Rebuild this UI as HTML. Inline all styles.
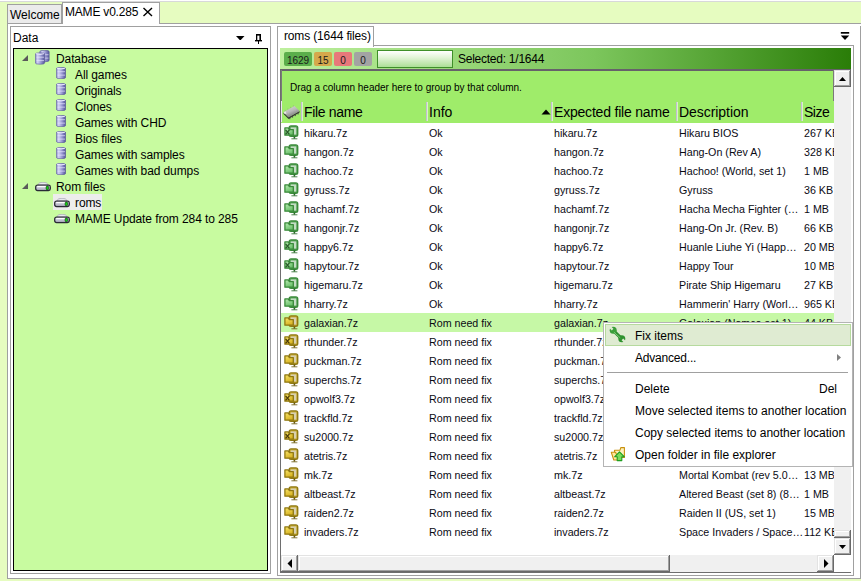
<!DOCTYPE html>
<html><head><meta charset="utf-8"><style>
*{box-sizing:border-box;margin:0;padding:0}
html,body{width:861px;height:581px;overflow:hidden}
body{position:relative;background:#e6fcc0;font-family:"Liberation Sans",sans-serif;font-size:12px;color:#000}
.a{position:absolute}
.t{position:absolute;white-space:nowrap;line-height:16px}
.r{position:absolute;white-space:nowrap;line-height:19px;font-size:10.7px;color:#0a0a14}
.h{position:absolute;white-space:nowrap;line-height:21px;font-size:14px;letter-spacing:-0.4px;color:#000}
.m{position:absolute;white-space:nowrap;line-height:22px;font-size:12px;color:#000;margin-top:1px}
#topline{left:0;top:0;width:861px;height:1px;background:#fff}
#topline2{left:0;top:1px;width:861px;height:1px;background:#d8d8da}
#outer{left:7px;top:23px;width:854px;height:556px;border:1px solid #a0a0a0;border-right:none;background:#fff}
#tabW{left:7px;top:4px;width:55px;height:19px;background:#ebebeb;border:1px solid #a0a0a0;border-bottom:none}
#tabM{left:62px;top:2px;width:98px;height:22px;background:#fff;border:1px solid #a0a0a0;border-bottom:none}
#lp{left:10px;top:26px;width:261px;height:548px;border:1px solid #a0a0a0;background:#fff}
#tree{left:13px;top:48px;width:255px;height:523px;border:1px solid #000;background:#c8fba0}
#rp{left:277px;top:26px;width:577px;height:550px;border:1px solid #a0a0a0;border-top:none;border-right:none;background:#fff}
#rpr{left:860px;top:26px;width:1px;height:553px;background:#a0a0a0}
#tabR{left:277px;top:26px;width:97px;height:21px;border:1px solid #a0a0a0;border-bottom:none;background:#fff}
#rpline{left:373px;top:45px;width:481px;height:1px;background:#a0a0a0}
#strip{left:280px;top:48px;width:571px;height:22px;background:linear-gradient(to right,#bef09e 0%,#7cc65c 55%,#2a7d08 100%)}
#grid{left:280px;top:69px;width:571px;height:504px;border-left:1px solid #6e6e6e;border-top:2px solid #66626a;border-bottom:1px solid #6e6e6e;background:#fff}
#grp{left:281px;top:71px;width:553px;height:30px;background:#9fec6a}
#hdr{left:281px;top:101px;width:553px;height:22px;background:#9fec6a}
.badge{position:absolute;top:52px;height:14px;border-radius:2px;font-size:10px;line-height:14px;padding-top:2px;text-align:center;color:#1a1a1a}
.sep{position:absolute;top:102px;width:2px;height:19px;border-left:1px solid #c4bcd4;border-right:1px solid #d8f5c4}
.sb{position:absolute;background:#f0f0f0;box-shadow:inset -1px -1px 0 #696969,inset 1px 1px 0 #e3e3e3,inset -2px -2px 0 #a0a0a0,inset 2px 2px 0 #fff}
#menu{left:603px;top:322px;width:250px;height:145px;background:#fff;border:1px solid #b4b4b4}

</style></head><body>
<svg width="0" height="0" style="position:absolute">
<defs>
<linearGradient id="dbg" x1="0" x2="1" y1="0" y2="0"><stop offset="0" stop-color="#8c8cc8"/><stop offset=".25" stop-color="#d2d2f4"/><stop offset=".6" stop-color="#9898d2"/><stop offset="1" stop-color="#525298"/></linearGradient>
<linearGradient id="drvg" x1="0" x2="0" y1="0" y2="1"><stop offset="0" stop-color="#f4f4fa"/><stop offset=".5" stop-color="#c6c6d6"/><stop offset="1" stop-color="#9a9aaa"/></linearGradient>
<linearGradient id="chipg" x1="0" x2="0.6" y1="0" y2="1"><stop offset="0" stop-color="#e0e0e0"/><stop offset=".55" stop-color="#b8b8b8"/><stop offset="1" stop-color="#707070"/></linearGradient>



<linearGradient id="igf" x1="0" x2="0.4" y1="0" y2="1"><stop offset="0" stop-color="#b8ecb2"/><stop offset="1" stop-color="#6cc06c"/></linearGradient><linearGradient id="iyf" x1="0" x2="0.4" y1="0" y2="1"><stop offset="0" stop-color="#f8e468"/><stop offset="1" stop-color="#d8b424"/></linearGradient></defs></svg>
<div id="topline" class="a"></div><div id="topline2" class="a"></div>
<div id="outer" class="a"></div>
<div id="tabW" class="a"></div>
<div class="t" style="left:10px;top:7px">Welcome</div>
<div id="tabM" class="a"></div>
<div class="t" style="left:65px;top:4px;letter-spacing:-0.2px">MAME v0.285</div>
<svg class="a" style="left:142px;top:7px" width="12" height="10"><path d="M1.5 1L10 9M10 1L1.5 9" stroke="#000" stroke-width="1.4"/></svg>
<div id="lp" class="a"></div>
<div class="t" style="left:13px;top:30px">Data</div>
<svg class="a" style="left:235px;top:35px" width="10" height="6"><polygon points="1,1 9.5,1 5.75,5 4.75,5" fill="#000"/></svg>
<svg class="a" style="left:253px;top:33px" width="10" height="12"><rect x="3" y="1" width="5" height="1.6" fill="#000"/><rect x="3" y="1" width="1.3" height="6.5" fill="#000"/><rect x="6.4" y="1" width="1.6" height="6.5" fill="#000"/><rect x="2" y="7" width="7" height="1.4" fill="#000"/><rect x="5" y="8" width="1" height="3" fill="#000"/></svg>
<div id="tree" class="a"></div>
<div id="rp" class="a"></div><div class="a" style="left:853px;top:45px;width:1px;height:531px;background:#a0a0a0"></div>
<div id="rpr" class="a"></div>
<div id="tabR" class="a"></div>
<div id="rpline" class="a"></div>
<div class="t" style="left:284px;top:28px;letter-spacing:-0.15px">roms (1644 files)</div>
<svg class="a" style="left:840px;top:31px" width="10" height="10"><rect x="0.8" y="1" width="8.4" height="1.7" fill="#000"/><polygon points="0.8,4.6 9.2,4.6 5,8.9" fill="#000"/></svg>
<div id="strip" class="a"></div>
<div class="badge" style="left:284px;width:28px;background:#5bae4b">1629</div>
<div class="badge" style="left:314px;width:18px;background:#d6a84c">15</div>
<div class="badge" style="left:334px;width:18px;background:#e8787a">0</div>
<div class="badge" style="left:354px;width:18px;background:#a3a3a3">0</div>
<div class="a" style="left:377px;top:50px;width:76px;height:18px;border:1px solid #3f8f2a;background:linear-gradient(#ffffff,#e2f4d8 40%,#acdf96)"></div>
<div class="t" style="left:458px;top:51px;letter-spacing:-0.25px">Selected: 1/1644</div>
<div id="grid" class="a"></div>
<div id="grp" class="a"></div>
<div class="t" style="left:290px;top:80px;font-size:10px">Drag a column header here to group by that column.</div>
<div id="hdr" class="a"></div><div class="a" style="left:281px;top:70px;width:1px;height:31px;background:#7a7a7a"></div><div class="a" style="left:833px;top:70px;width:1px;height:31px;background:#7a7a7a"></div><div class="a" style="left:281px;top:101px;width:1px;height:21px;background:#ece6f4"></div>
<svg class="a" style="left:281px;top:103px" width="20" height="20"><rect x="8.32" y="14.64" width="1" height="1.6" fill="#505050"/><rect x="11.07" y="13.07" width="1" height="1.6" fill="#505050"/><rect x="13.82" y="11.49" width="1" height="1.6" fill="#505050"/><rect x="16.57" y="9.92" width="1" height="1.6" fill="#505050"/><rect x="3.65" y="6.90" width="1" height="1.4" fill="#8a8a8a" opacity=".45"/><rect x="6.40" y="5.40" width="1" height="1.4" fill="#8a8a8a" opacity=".45"/><rect x="9.15" y="3.90" width="1" height="1.4" fill="#8a8a8a" opacity=".45"/><rect x="11.90" y="2.40" width="1" height="1.4" fill="#8a8a8a" opacity=".45"/><polygon points="2.5,9.2 7.5,14.2 18.6,8 18.6,9.6 7.5,16 2.5,11" fill="#383838"/><polygon points="2.5,9.2 13.5,3 18.6,8 7.5,14.2" fill="url(#chipg)"/><polygon points="2.6,9.4 4.5,8.3 5.5,10.5 3.6,11" fill="#f2f2f2" opacity=".8"/></svg>
<div class="sep" style="left:301px"></div>
<div class="h" style="left:304px;top:102px;letter-spacing:-0.33px">File name</div>
<div class="sep" style="left:426px"></div>
<div class="h" style="left:429px;top:102px;letter-spacing:0">Info</div>
<svg class="a" style="left:541px;top:108px" width="10" height="7"><polygon points="0.5,6.5 9.5,6.5 5,1.5" fill="#000"/></svg>
<div class="sep" style="left:551px"></div>
<div class="h" style="left:554px;top:102px;letter-spacing:-0.2px">Expected file name</div>
<div class="sep" style="left:676px"></div>
<div class="h" style="left:679px;top:102px;letter-spacing:-0.05px">Description</div>
<div class="sep" style="left:801px"></div>
<div class="h" style="left:804px;top:102px;letter-spacing:-0.5px">Size</div>
<svg class="a" style="left:21px;top:54px" width="8" height="8"><polygon points="7,1 7,7 1,7" fill="#5a5a5a"/></svg><svg class="a" style="left:35px;top:50px" width="15" height="15" viewBox="0 0 15 15"><g transform="translate(4.5 0)"><path d="M0.3 1.6Q0.3 0.3 5 0.3Q9.7 0.3 9.7 1.6V10.4Q9.7 11.7 5 11.7Q0.3 11.7 0.3 10.4Z" fill="url(#dbg)" stroke="#5a5a98" stroke-width=".6"/><rect x="1.5" y="4.2" width="7.5" height="1" fill="#e6e6ff" opacity=".7"/><rect x="1.5" y="7.6" width="7.5" height="1" fill="#e6e6ff" opacity=".7"/></g><g transform="translate(0 2.5)"><path d="M0.3 1.6Q0.3 0.3 5 0.3Q9.7 0.3 9.7 1.6V10.4Q9.7 11.7 5 11.7Q0.3 11.7 0.3 10.4Z" fill="url(#dbg)" stroke="#5a5a98" stroke-width=".6"/><path d="M1 1.2Q5 2.6 9 1.2" stroke="#ececff" stroke-width="1" fill="none"/><rect x="1.5" y="4.2" width="7.5" height="1" fill="#e6e6ff" opacity=".7"/><rect x="1.5" y="7.6" width="7.5" height="1" fill="#e6e6ff" opacity=".7"/></g></svg><div class="t" style="left:56px;top:51px;letter-spacing:-0.1px">Database</div><svg class="a" style="left:56px;top:67px" width="10" height="12" viewBox="0 0 10 12"><path d="M0.3 1.6Q0.3 0.3 5 0.3Q9.7 0.3 9.7 1.6V10.4Q9.7 11.7 5 11.7Q0.3 11.7 0.3 10.4Z" fill="url(#dbg)" stroke="#5a5a98" stroke-width=".6"/><path d="M1 1.2Q5 2.6 9 1.2" stroke="#ececff" stroke-width="1" fill="none"/><rect x="1.5" y="4.2" width="7.5" height="1" fill="#e6e6ff" opacity=".7"/><rect x="1.5" y="7.6" width="7.5" height="1" fill="#e6e6ff" opacity=".7"/></svg><div class="t" style="left:75px;top:67px;letter-spacing:-0.1px">All games</div><svg class="a" style="left:56px;top:83px" width="10" height="12" viewBox="0 0 10 12"><path d="M0.3 1.6Q0.3 0.3 5 0.3Q9.7 0.3 9.7 1.6V10.4Q9.7 11.7 5 11.7Q0.3 11.7 0.3 10.4Z" fill="url(#dbg)" stroke="#5a5a98" stroke-width=".6"/><path d="M1 1.2Q5 2.6 9 1.2" stroke="#ececff" stroke-width="1" fill="none"/><rect x="1.5" y="4.2" width="7.5" height="1" fill="#e6e6ff" opacity=".7"/><rect x="1.5" y="7.6" width="7.5" height="1" fill="#e6e6ff" opacity=".7"/></svg><div class="t" style="left:75px;top:83px;letter-spacing:-0.1px">Originals</div><svg class="a" style="left:56px;top:99px" width="10" height="12" viewBox="0 0 10 12"><path d="M0.3 1.6Q0.3 0.3 5 0.3Q9.7 0.3 9.7 1.6V10.4Q9.7 11.7 5 11.7Q0.3 11.7 0.3 10.4Z" fill="url(#dbg)" stroke="#5a5a98" stroke-width=".6"/><path d="M1 1.2Q5 2.6 9 1.2" stroke="#ececff" stroke-width="1" fill="none"/><rect x="1.5" y="4.2" width="7.5" height="1" fill="#e6e6ff" opacity=".7"/><rect x="1.5" y="7.6" width="7.5" height="1" fill="#e6e6ff" opacity=".7"/></svg><div class="t" style="left:75px;top:99px;letter-spacing:-0.1px">Clones</div><svg class="a" style="left:56px;top:115px" width="10" height="12" viewBox="0 0 10 12"><path d="M0.3 1.6Q0.3 0.3 5 0.3Q9.7 0.3 9.7 1.6V10.4Q9.7 11.7 5 11.7Q0.3 11.7 0.3 10.4Z" fill="url(#dbg)" stroke="#5a5a98" stroke-width=".6"/><path d="M1 1.2Q5 2.6 9 1.2" stroke="#ececff" stroke-width="1" fill="none"/><rect x="1.5" y="4.2" width="7.5" height="1" fill="#e6e6ff" opacity=".7"/><rect x="1.5" y="7.6" width="7.5" height="1" fill="#e6e6ff" opacity=".7"/></svg><div class="t" style="left:75px;top:115px;letter-spacing:-0.1px">Games with CHD</div><svg class="a" style="left:56px;top:131px" width="10" height="12" viewBox="0 0 10 12"><path d="M0.3 1.6Q0.3 0.3 5 0.3Q9.7 0.3 9.7 1.6V10.4Q9.7 11.7 5 11.7Q0.3 11.7 0.3 10.4Z" fill="url(#dbg)" stroke="#5a5a98" stroke-width=".6"/><path d="M1 1.2Q5 2.6 9 1.2" stroke="#ececff" stroke-width="1" fill="none"/><rect x="1.5" y="4.2" width="7.5" height="1" fill="#e6e6ff" opacity=".7"/><rect x="1.5" y="7.6" width="7.5" height="1" fill="#e6e6ff" opacity=".7"/></svg><div class="t" style="left:75px;top:131px;letter-spacing:-0.1px">Bios files</div><svg class="a" style="left:56px;top:147px" width="10" height="12" viewBox="0 0 10 12"><path d="M0.3 1.6Q0.3 0.3 5 0.3Q9.7 0.3 9.7 1.6V10.4Q9.7 11.7 5 11.7Q0.3 11.7 0.3 10.4Z" fill="url(#dbg)" stroke="#5a5a98" stroke-width=".6"/><path d="M1 1.2Q5 2.6 9 1.2" stroke="#ececff" stroke-width="1" fill="none"/><rect x="1.5" y="4.2" width="7.5" height="1" fill="#e6e6ff" opacity=".7"/><rect x="1.5" y="7.6" width="7.5" height="1" fill="#e6e6ff" opacity=".7"/></svg><div class="t" style="left:75px;top:147px;letter-spacing:-0.1px">Games with samples</div><svg class="a" style="left:56px;top:163px" width="10" height="12" viewBox="0 0 10 12"><path d="M0.3 1.6Q0.3 0.3 5 0.3Q9.7 0.3 9.7 1.6V10.4Q9.7 11.7 5 11.7Q0.3 11.7 0.3 10.4Z" fill="url(#dbg)" stroke="#5a5a98" stroke-width=".6"/><path d="M1 1.2Q5 2.6 9 1.2" stroke="#ececff" stroke-width="1" fill="none"/><rect x="1.5" y="4.2" width="7.5" height="1" fill="#e6e6ff" opacity=".7"/><rect x="1.5" y="7.6" width="7.5" height="1" fill="#e6e6ff" opacity=".7"/></svg><div class="t" style="left:75px;top:163px;letter-spacing:-0.1px">Games with bad dumps</div><svg class="a" style="left:21px;top:182px" width="8" height="8"><polygon points="7,1 7,7 1,7" fill="#5a5a5a"/></svg><svg class="a" style="left:35px;top:182px" width="16" height="10" viewBox="0 0 16 10"><path d="M3 3Q3.4 0.3 8 0.3Q12.6 0.3 13 3Z" fill="#e8e8ee" stroke="#a4a4b0" stroke-width=".7"/><rect x="0.7" y="3.2" width="14.6" height="5.4" rx="1.8" fill="url(#drvg)" stroke="#2a2a36" stroke-width="1.3"/><rect x="2.4" y="3.9" width="9" height="1" fill="#fff"/><rect x="11.1" y="4.1" width="2.5" height="3.6" rx="1" fill="#10d010" stroke="#0a300a" stroke-width=".6"/></svg><div class="t" style="left:56px;top:179px;letter-spacing:-0.1px">Rom files</div><div class="a" style="left:53px;top:194px;width:49px;height:16px;background:#ededed"></div><svg class="a" style="left:54px;top:198px" width="16" height="10" viewBox="0 0 16 10"><path d="M3 3Q3.4 0.3 8 0.3Q12.6 0.3 13 3Z" fill="#e8e8ee" stroke="#a4a4b0" stroke-width=".7"/><rect x="0.7" y="3.2" width="14.6" height="5.4" rx="1.8" fill="url(#drvg)" stroke="#2a2a36" stroke-width="1.3"/><rect x="2.4" y="3.9" width="9" height="1" fill="#fff"/><rect x="11.1" y="4.1" width="2.5" height="3.6" rx="1" fill="#10d010" stroke="#0a300a" stroke-width=".6"/></svg><div class="t" style="left:75px;top:195px;letter-spacing:-0.1px">roms</div><svg class="a" style="left:54px;top:214px" width="16" height="10" viewBox="0 0 16 10"><path d="M3 3Q3.4 0.3 8 0.3Q12.6 0.3 13 3Z" fill="#e8e8ee" stroke="#a4a4b0" stroke-width=".7"/><rect x="0.7" y="3.2" width="14.6" height="5.4" rx="1.8" fill="url(#drvg)" stroke="#2a2a36" stroke-width="1.3"/><rect x="2.4" y="3.9" width="9" height="1" fill="#fff"/><rect x="11.1" y="4.1" width="2.5" height="3.6" rx="1" fill="#10d010" stroke="#0a300a" stroke-width=".6"/></svg><div class="t" style="left:75px;top:211px;letter-spacing:-0.1px">MAME Update from 284 to 285</div><svg class="a" style="left:282px;top:123px" width="18" height="18" viewBox="0 0 18 18"><rect x="7.2" y="2.9" width="8.5" height="10.3" rx="1.8" fill="#4f9f4f" stroke="#3a8a3a" stroke-width="1.4"/><rect x="8.7" y="4.4" width="5.6" height="7.2" fill="#c4dcc4"/><rect x="11.6" y="13.6" width="1.6" height="2" fill="#2a6a2a"/><rect x="9.4" y="15.3" width="6" height="1" fill="#2a6a2a" opacity=".8"/><path d="M2.9 4.9H6.2L7.4 6.6H11.3V12.2H2.9Z" fill="url(#igf)" stroke="#3a8a3a" stroke-width="1.3" stroke-linejoin="round"/><path d="M3.6 6.8L7.4 11.4M7.4 6.8L3.6 11.4" stroke="#2a5a2a" stroke-width="1.3"/></svg><div class="r" style="left:304px;top:124px">hikaru.7z</div><div class="r" style="left:429px;top:124px">Ok</div><div class="r" style="left:554px;top:124px">hikaru.7z</div><div class="r" style="left:679px;top:124px">Hikaru BIOS</div><div class="r" style="left:804px;top:124px">267 KB</div><svg class="a" style="left:282px;top:142px" width="18" height="18" viewBox="0 0 18 18"><rect x="7.2" y="2.9" width="8.5" height="10.3" rx="1.8" fill="#4f9f4f" stroke="#3a8a3a" stroke-width="1.4"/><rect x="8.7" y="4.4" width="5.6" height="7.2" fill="#c4dcc4"/><rect x="11.6" y="13.6" width="1.6" height="2" fill="#2a6a2a"/><rect x="9.4" y="15.3" width="6" height="1" fill="#2a6a2a" opacity=".8"/><path d="M2.9 4.9H6.2L7.4 6.6H11.3V12.2H2.9Z" fill="url(#igf)" stroke="#3a8a3a" stroke-width="1.3" stroke-linejoin="round"/></svg><div class="r" style="left:304px;top:143px">hangon.7z</div><div class="r" style="left:429px;top:143px">Ok</div><div class="r" style="left:554px;top:143px">hangon.7z</div><div class="r" style="left:679px;top:143px">Hang-On (Rev A)</div><div class="r" style="left:804px;top:143px">328 KB</div><svg class="a" style="left:282px;top:161px" width="18" height="18" viewBox="0 0 18 18"><rect x="7.2" y="2.9" width="8.5" height="10.3" rx="1.8" fill="#4f9f4f" stroke="#3a8a3a" stroke-width="1.4"/><rect x="8.7" y="4.4" width="5.6" height="7.2" fill="#c4dcc4"/><rect x="11.6" y="13.6" width="1.6" height="2" fill="#2a6a2a"/><rect x="9.4" y="15.3" width="6" height="1" fill="#2a6a2a" opacity=".8"/><path d="M2.9 4.9H6.2L7.4 6.6H11.3V12.2H2.9Z" fill="url(#igf)" stroke="#3a8a3a" stroke-width="1.3" stroke-linejoin="round"/></svg><div class="r" style="left:304px;top:162px">hachoo.7z</div><div class="r" style="left:429px;top:162px">Ok</div><div class="r" style="left:554px;top:162px">hachoo.7z</div><div class="r" style="left:679px;top:162px">Hachoo! (World, set 1)</div><div class="r" style="left:804px;top:162px">1 MB</div><svg class="a" style="left:282px;top:180px" width="18" height="18" viewBox="0 0 18 18"><rect x="7.2" y="2.9" width="8.5" height="10.3" rx="1.8" fill="#4f9f4f" stroke="#3a8a3a" stroke-width="1.4"/><rect x="8.7" y="4.4" width="5.6" height="7.2" fill="#c4dcc4"/><rect x="11.6" y="13.6" width="1.6" height="2" fill="#2a6a2a"/><rect x="9.4" y="15.3" width="6" height="1" fill="#2a6a2a" opacity=".8"/><path d="M2.9 4.9H6.2L7.4 6.6H11.3V12.2H2.9Z" fill="url(#igf)" stroke="#3a8a3a" stroke-width="1.3" stroke-linejoin="round"/></svg><div class="r" style="left:304px;top:181px">gyruss.7z</div><div class="r" style="left:429px;top:181px">Ok</div><div class="r" style="left:554px;top:181px">gyruss.7z</div><div class="r" style="left:679px;top:181px">Gyruss</div><div class="r" style="left:804px;top:181px">36 KB</div><svg class="a" style="left:282px;top:199px" width="18" height="18" viewBox="0 0 18 18"><rect x="7.2" y="2.9" width="8.5" height="10.3" rx="1.8" fill="#4f9f4f" stroke="#3a8a3a" stroke-width="1.4"/><rect x="8.7" y="4.4" width="5.6" height="7.2" fill="#c4dcc4"/><rect x="11.6" y="13.6" width="1.6" height="2" fill="#2a6a2a"/><rect x="9.4" y="15.3" width="6" height="1" fill="#2a6a2a" opacity=".8"/><path d="M2.9 4.9H6.2L7.4 6.6H11.3V12.2H2.9Z" fill="url(#igf)" stroke="#3a8a3a" stroke-width="1.3" stroke-linejoin="round"/></svg><div class="r" style="left:304px;top:200px">hachamf.7z</div><div class="r" style="left:429px;top:200px">Ok</div><div class="r" style="left:554px;top:200px">hachamf.7z</div><div class="r" style="left:679px;top:200px">Hacha Mecha Fighter (…</div><div class="r" style="left:804px;top:200px">1 MB</div><svg class="a" style="left:282px;top:218px" width="18" height="18" viewBox="0 0 18 18"><rect x="7.2" y="2.9" width="8.5" height="10.3" rx="1.8" fill="#4f9f4f" stroke="#3a8a3a" stroke-width="1.4"/><rect x="8.7" y="4.4" width="5.6" height="7.2" fill="#c4dcc4"/><rect x="11.6" y="13.6" width="1.6" height="2" fill="#2a6a2a"/><rect x="9.4" y="15.3" width="6" height="1" fill="#2a6a2a" opacity=".8"/><path d="M2.9 4.9H6.2L7.4 6.6H11.3V12.2H2.9Z" fill="url(#igf)" stroke="#3a8a3a" stroke-width="1.3" stroke-linejoin="round"/></svg><div class="r" style="left:304px;top:219px">hangonjr.7z</div><div class="r" style="left:429px;top:219px">Ok</div><div class="r" style="left:554px;top:219px">hangonjr.7z</div><div class="r" style="left:679px;top:219px">Hang-On Jr. (Rev. B)</div><div class="r" style="left:804px;top:219px">66 KB</div><svg class="a" style="left:282px;top:237px" width="18" height="18" viewBox="0 0 18 18"><rect x="7.2" y="2.9" width="8.5" height="10.3" rx="1.8" fill="#4f9f4f" stroke="#3a8a3a" stroke-width="1.4"/><rect x="8.7" y="4.4" width="5.6" height="7.2" fill="#c4dcc4"/><rect x="11.6" y="13.6" width="1.6" height="2" fill="#2a6a2a"/><rect x="9.4" y="15.3" width="6" height="1" fill="#2a6a2a" opacity=".8"/><path d="M2.9 4.9H6.2L7.4 6.6H11.3V12.2H2.9Z" fill="url(#igf)" stroke="#3a8a3a" stroke-width="1.3" stroke-linejoin="round"/><path d="M3.6 6.8L7.4 11.4M7.4 6.8L3.6 11.4" stroke="#2a5a2a" stroke-width="1.3"/></svg><div class="r" style="left:304px;top:238px">happy6.7z</div><div class="r" style="left:429px;top:238px">Ok</div><div class="r" style="left:554px;top:238px">happy6.7z</div><div class="r" style="left:679px;top:238px">Huanle Liuhe Yi (Happ…</div><div class="r" style="left:804px;top:238px">20 MB</div><svg class="a" style="left:282px;top:256px" width="18" height="18" viewBox="0 0 18 18"><rect x="7.2" y="2.9" width="8.5" height="10.3" rx="1.8" fill="#4f9f4f" stroke="#3a8a3a" stroke-width="1.4"/><rect x="8.7" y="4.4" width="5.6" height="7.2" fill="#c4dcc4"/><rect x="11.6" y="13.6" width="1.6" height="2" fill="#2a6a2a"/><rect x="9.4" y="15.3" width="6" height="1" fill="#2a6a2a" opacity=".8"/><path d="M2.9 4.9H6.2L7.4 6.6H11.3V12.2H2.9Z" fill="url(#igf)" stroke="#3a8a3a" stroke-width="1.3" stroke-linejoin="round"/><path d="M3.6 6.8L7.4 11.4M7.4 6.8L3.6 11.4" stroke="#2a5a2a" stroke-width="1.3"/></svg><div class="r" style="left:304px;top:257px">hapytour.7z</div><div class="r" style="left:429px;top:257px">Ok</div><div class="r" style="left:554px;top:257px">hapytour.7z</div><div class="r" style="left:679px;top:257px">Happy Tour</div><div class="r" style="left:804px;top:257px">10 MB</div><svg class="a" style="left:282px;top:275px" width="18" height="18" viewBox="0 0 18 18"><rect x="7.2" y="2.9" width="8.5" height="10.3" rx="1.8" fill="#4f9f4f" stroke="#3a8a3a" stroke-width="1.4"/><rect x="8.7" y="4.4" width="5.6" height="7.2" fill="#c4dcc4"/><rect x="11.6" y="13.6" width="1.6" height="2" fill="#2a6a2a"/><rect x="9.4" y="15.3" width="6" height="1" fill="#2a6a2a" opacity=".8"/><path d="M2.9 4.9H6.2L7.4 6.6H11.3V12.2H2.9Z" fill="url(#igf)" stroke="#3a8a3a" stroke-width="1.3" stroke-linejoin="round"/></svg><div class="r" style="left:304px;top:276px">higemaru.7z</div><div class="r" style="left:429px;top:276px">Ok</div><div class="r" style="left:554px;top:276px">higemaru.7z</div><div class="r" style="left:679px;top:276px">Pirate Ship Higemaru</div><div class="r" style="left:804px;top:276px">27 KB</div><svg class="a" style="left:282px;top:294px" width="18" height="18" viewBox="0 0 18 18"><rect x="7.2" y="2.9" width="8.5" height="10.3" rx="1.8" fill="#4f9f4f" stroke="#3a8a3a" stroke-width="1.4"/><rect x="8.7" y="4.4" width="5.6" height="7.2" fill="#c4dcc4"/><rect x="11.6" y="13.6" width="1.6" height="2" fill="#2a6a2a"/><rect x="9.4" y="15.3" width="6" height="1" fill="#2a6a2a" opacity=".8"/><path d="M2.9 4.9H6.2L7.4 6.6H11.3V12.2H2.9Z" fill="url(#igf)" stroke="#3a8a3a" stroke-width="1.3" stroke-linejoin="round"/></svg><div class="r" style="left:304px;top:295px">hharry.7z</div><div class="r" style="left:429px;top:295px">Ok</div><div class="r" style="left:554px;top:295px">hharry.7z</div><div class="r" style="left:679px;top:295px">Hammerin' Harry (Worl…</div><div class="r" style="left:804px;top:295px">965 KB</div><div class="a" style="left:281px;top:313px;width:553px;height:19px;background:#c6f8a6"></div><svg class="a" style="left:282px;top:313px" width="18" height="18" viewBox="0 0 18 18"><rect x="7.2" y="2.9" width="8.5" height="10.3" rx="1.8" fill="#c4a82a" stroke="#8f7812" stroke-width="1.4"/><rect x="8.7" y="4.4" width="5.6" height="7.2" fill="#d8d0b0"/><rect x="11.6" y="13.6" width="1.6" height="2" fill="#6a5a10"/><rect x="9.4" y="15.3" width="6" height="1" fill="#6a5a10" opacity=".8"/><path d="M2.9 4.9H6.2L7.4 6.6H11.3V12.2H2.9Z" fill="url(#iyf)" stroke="#8f7812" stroke-width="1.3" stroke-linejoin="round"/></svg><div class="r" style="left:304px;top:314px">galaxian.7z</div><div class="r" style="left:429px;top:314px">Rom need fix</div><div class="r" style="left:554px;top:314px">galaxian.7z</div><div class="r" style="left:679px;top:314px">Galaxian (Namco set 1)</div><div class="r" style="left:804px;top:314px">44 KB</div><svg class="a" style="left:282px;top:332px" width="18" height="18" viewBox="0 0 18 18"><rect x="7.2" y="2.9" width="8.5" height="10.3" rx="1.8" fill="#c4a82a" stroke="#8f7812" stroke-width="1.4"/><rect x="8.7" y="4.4" width="5.6" height="7.2" fill="#d8d0b0"/><rect x="11.6" y="13.6" width="1.6" height="2" fill="#6a5a10"/><rect x="9.4" y="15.3" width="6" height="1" fill="#6a5a10" opacity=".8"/><path d="M2.9 4.9H6.2L7.4 6.6H11.3V12.2H2.9Z" fill="url(#iyf)" stroke="#8f7812" stroke-width="1.3" stroke-linejoin="round"/><path d="M3.6 6.8L7.4 11.4M7.4 6.8L3.6 11.4" stroke="#4a3a08" stroke-width="1.3"/></svg><div class="r" style="left:304px;top:333px">rthunder.7z</div><div class="r" style="left:429px;top:333px">Rom need fix</div><div class="r" style="left:554px;top:333px">rthunder.7z</div><div class="r" style="left:679px;top:333px">Rolling Thunder (rev 3)</div><div class="r" style="left:804px;top:333px">1 MB</div><svg class="a" style="left:282px;top:351px" width="18" height="18" viewBox="0 0 18 18"><rect x="7.2" y="2.9" width="8.5" height="10.3" rx="1.8" fill="#c4a82a" stroke="#8f7812" stroke-width="1.4"/><rect x="8.7" y="4.4" width="5.6" height="7.2" fill="#d8d0b0"/><rect x="11.6" y="13.6" width="1.6" height="2" fill="#6a5a10"/><rect x="9.4" y="15.3" width="6" height="1" fill="#6a5a10" opacity=".8"/><path d="M2.9 4.9H6.2L7.4 6.6H11.3V12.2H2.9Z" fill="url(#iyf)" stroke="#8f7812" stroke-width="1.3" stroke-linejoin="round"/></svg><div class="r" style="left:304px;top:352px">puckman.7z</div><div class="r" style="left:429px;top:352px">Rom need fix</div><div class="r" style="left:554px;top:352px">puckman.7z</div><div class="r" style="left:679px;top:352px">Puck Man (Japan set 1)</div><div class="r" style="left:804px;top:352px">1 MB</div><svg class="a" style="left:282px;top:370px" width="18" height="18" viewBox="0 0 18 18"><rect x="7.2" y="2.9" width="8.5" height="10.3" rx="1.8" fill="#c4a82a" stroke="#8f7812" stroke-width="1.4"/><rect x="8.7" y="4.4" width="5.6" height="7.2" fill="#d8d0b0"/><rect x="11.6" y="13.6" width="1.6" height="2" fill="#6a5a10"/><rect x="9.4" y="15.3" width="6" height="1" fill="#6a5a10" opacity=".8"/><path d="M2.9 4.9H6.2L7.4 6.6H11.3V12.2H2.9Z" fill="url(#iyf)" stroke="#8f7812" stroke-width="1.3" stroke-linejoin="round"/></svg><div class="r" style="left:304px;top:371px">superchs.7z</div><div class="r" style="left:429px;top:371px">Rom need fix</div><div class="r" style="left:554px;top:371px">superchs.7z</div><div class="r" style="left:679px;top:371px">Super Chase</div><div class="r" style="left:804px;top:371px">1 MB</div><svg class="a" style="left:282px;top:389px" width="18" height="18" viewBox="0 0 18 18"><rect x="7.2" y="2.9" width="8.5" height="10.3" rx="1.8" fill="#c4a82a" stroke="#8f7812" stroke-width="1.4"/><rect x="8.7" y="4.4" width="5.6" height="7.2" fill="#d8d0b0"/><rect x="11.6" y="13.6" width="1.6" height="2" fill="#6a5a10"/><rect x="9.4" y="15.3" width="6" height="1" fill="#6a5a10" opacity=".8"/><path d="M2.9 4.9H6.2L7.4 6.6H11.3V12.2H2.9Z" fill="url(#iyf)" stroke="#8f7812" stroke-width="1.3" stroke-linejoin="round"/><path d="M3.6 6.8L7.4 11.4M7.4 6.8L3.6 11.4" stroke="#4a3a08" stroke-width="1.3"/></svg><div class="r" style="left:304px;top:390px">opwolf3.7z</div><div class="r" style="left:429px;top:390px">Rom need fix</div><div class="r" style="left:554px;top:390px">opwolf3.7z</div><div class="r" style="left:679px;top:390px">Operation Wolf 3</div><div class="r" style="left:804px;top:390px">1 MB</div><svg class="a" style="left:282px;top:408px" width="18" height="18" viewBox="0 0 18 18"><rect x="7.2" y="2.9" width="8.5" height="10.3" rx="1.8" fill="#c4a82a" stroke="#8f7812" stroke-width="1.4"/><rect x="8.7" y="4.4" width="5.6" height="7.2" fill="#d8d0b0"/><rect x="11.6" y="13.6" width="1.6" height="2" fill="#6a5a10"/><rect x="9.4" y="15.3" width="6" height="1" fill="#6a5a10" opacity=".8"/><path d="M2.9 4.9H6.2L7.4 6.6H11.3V12.2H2.9Z" fill="url(#iyf)" stroke="#8f7812" stroke-width="1.3" stroke-linejoin="round"/></svg><div class="r" style="left:304px;top:409px">trackfld.7z</div><div class="r" style="left:429px;top:409px">Rom need fix</div><div class="r" style="left:554px;top:409px">trackfld.7z</div><div class="r" style="left:679px;top:409px">Track &amp; Field</div><div class="r" style="left:804px;top:409px">1 MB</div><svg class="a" style="left:282px;top:427px" width="18" height="18" viewBox="0 0 18 18"><rect x="7.2" y="2.9" width="8.5" height="10.3" rx="1.8" fill="#c4a82a" stroke="#8f7812" stroke-width="1.4"/><rect x="8.7" y="4.4" width="5.6" height="7.2" fill="#d8d0b0"/><rect x="11.6" y="13.6" width="1.6" height="2" fill="#6a5a10"/><rect x="9.4" y="15.3" width="6" height="1" fill="#6a5a10" opacity=".8"/><path d="M2.9 4.9H6.2L7.4 6.6H11.3V12.2H2.9Z" fill="url(#iyf)" stroke="#8f7812" stroke-width="1.3" stroke-linejoin="round"/><path d="M3.6 6.8L7.4 11.4M7.4 6.8L3.6 11.4" stroke="#4a3a08" stroke-width="1.3"/></svg><div class="r" style="left:304px;top:428px">su2000.7z</div><div class="r" style="left:429px;top:428px">Rom need fix</div><div class="r" style="left:554px;top:428px">su2000.7z</div><div class="r" style="left:679px;top:428px">SU2000</div><div class="r" style="left:804px;top:428px">1 MB</div><svg class="a" style="left:282px;top:446px" width="18" height="18" viewBox="0 0 18 18"><rect x="7.2" y="2.9" width="8.5" height="10.3" rx="1.8" fill="#c4a82a" stroke="#8f7812" stroke-width="1.4"/><rect x="8.7" y="4.4" width="5.6" height="7.2" fill="#d8d0b0"/><rect x="11.6" y="13.6" width="1.6" height="2" fill="#6a5a10"/><rect x="9.4" y="15.3" width="6" height="1" fill="#6a5a10" opacity=".8"/><path d="M2.9 4.9H6.2L7.4 6.6H11.3V12.2H2.9Z" fill="url(#iyf)" stroke="#8f7812" stroke-width="1.3" stroke-linejoin="round"/></svg><div class="r" style="left:304px;top:447px">atetris.7z</div><div class="r" style="left:429px;top:447px">Rom need fix</div><div class="r" style="left:554px;top:447px">atetris.7z</div><div class="r" style="left:679px;top:447px">Tetris (set 1)</div><div class="r" style="left:804px;top:447px">1 MB</div><svg class="a" style="left:282px;top:465px" width="18" height="18" viewBox="0 0 18 18"><rect x="7.2" y="2.9" width="8.5" height="10.3" rx="1.8" fill="#c4a82a" stroke="#8f7812" stroke-width="1.4"/><rect x="8.7" y="4.4" width="5.6" height="7.2" fill="#d8d0b0"/><rect x="11.6" y="13.6" width="1.6" height="2" fill="#6a5a10"/><rect x="9.4" y="15.3" width="6" height="1" fill="#6a5a10" opacity=".8"/><path d="M2.9 4.9H6.2L7.4 6.6H11.3V12.2H2.9Z" fill="url(#iyf)" stroke="#8f7812" stroke-width="1.3" stroke-linejoin="round"/></svg><div class="r" style="left:304px;top:466px">mk.7z</div><div class="r" style="left:429px;top:466px">Rom need fix</div><div class="r" style="left:554px;top:466px">mk.7z</div><div class="r" style="left:679px;top:466px">Mortal Kombat (rev 5.0…</div><div class="r" style="left:804px;top:466px">13 MB</div><svg class="a" style="left:282px;top:484px" width="18" height="18" viewBox="0 0 18 18"><rect x="7.2" y="2.9" width="8.5" height="10.3" rx="1.8" fill="#c4a82a" stroke="#8f7812" stroke-width="1.4"/><rect x="8.7" y="4.4" width="5.6" height="7.2" fill="#d8d0b0"/><rect x="11.6" y="13.6" width="1.6" height="2" fill="#6a5a10"/><rect x="9.4" y="15.3" width="6" height="1" fill="#6a5a10" opacity=".8"/><path d="M2.9 4.9H6.2L7.4 6.6H11.3V12.2H2.9Z" fill="url(#iyf)" stroke="#8f7812" stroke-width="1.3" stroke-linejoin="round"/></svg><div class="r" style="left:304px;top:485px">altbeast.7z</div><div class="r" style="left:429px;top:485px">Rom need fix</div><div class="r" style="left:554px;top:485px">altbeast.7z</div><div class="r" style="left:679px;top:485px">Altered Beast (set 8) (8…</div><div class="r" style="left:804px;top:485px">1 MB</div><svg class="a" style="left:282px;top:503px" width="18" height="18" viewBox="0 0 18 18"><rect x="7.2" y="2.9" width="8.5" height="10.3" rx="1.8" fill="#c4a82a" stroke="#8f7812" stroke-width="1.4"/><rect x="8.7" y="4.4" width="5.6" height="7.2" fill="#d8d0b0"/><rect x="11.6" y="13.6" width="1.6" height="2" fill="#6a5a10"/><rect x="9.4" y="15.3" width="6" height="1" fill="#6a5a10" opacity=".8"/><path d="M2.9 4.9H6.2L7.4 6.6H11.3V12.2H2.9Z" fill="url(#iyf)" stroke="#8f7812" stroke-width="1.3" stroke-linejoin="round"/></svg><div class="r" style="left:304px;top:504px">raiden2.7z</div><div class="r" style="left:429px;top:504px">Rom need fix</div><div class="r" style="left:554px;top:504px">raiden2.7z</div><div class="r" style="left:679px;top:504px">Raiden II (US, set 1)</div><div class="r" style="left:804px;top:504px">15 MB</div><svg class="a" style="left:282px;top:522px" width="18" height="18" viewBox="0 0 18 18"><rect x="7.2" y="2.9" width="8.5" height="10.3" rx="1.8" fill="#c4a82a" stroke="#8f7812" stroke-width="1.4"/><rect x="8.7" y="4.4" width="5.6" height="7.2" fill="#d8d0b0"/><rect x="11.6" y="13.6" width="1.6" height="2" fill="#6a5a10"/><rect x="9.4" y="15.3" width="6" height="1" fill="#6a5a10" opacity=".8"/><path d="M2.9 4.9H6.2L7.4 6.6H11.3V12.2H2.9Z" fill="url(#iyf)" stroke="#8f7812" stroke-width="1.3" stroke-linejoin="round"/></svg><div class="r" style="left:304px;top:523px">invaders.7z</div><div class="r" style="left:429px;top:523px">Rom need fix</div><div class="r" style="left:554px;top:523px">invaders.7z</div><div class="r" style="left:679px;top:523px">Space Invaders / Space…</div><div class="r" style="left:804px;top:523px">112 KB</div><div class="a" style="left:834px;top:70px;width:17px;height:502px;background:#f0f0f0"></div>
<div class="sb" style="left:834px;top:70px;width:17px;height:17px"></div>
<svg class="a" style="left:837px;top:74px" width="11" height="8"><polygon points="2,7 9,7 5.5,3" fill="#000"/></svg>
<div class="sb" style="left:834px;top:530px;width:17px;height:8px"></div>
<div class="sb" style="left:834px;top:538px;width:17px;height:17px"></div>
<svg class="a" style="left:837px;top:542px" width="11" height="8"><polygon points="2,3 9,3 5.5,7" fill="#000"/></svg>
<div class="a" style="left:281px;top:555px;width:553px;height:17px;background:#f0f0f0"></div>
<div class="sb" style="left:298px;top:555px;width:372px;height:17px"></div>
<div class="sb" style="left:281px;top:555px;width:17px;height:17px"></div>
<svg class="a" style="left:285px;top:558px" width="10" height="11"><polygon points="7,1 7,10 2.5,5.5" fill="#000"/></svg>
<div class="sb" style="left:817px;top:555px;width:17px;height:17px"></div>
<svg class="a" style="left:821px;top:558px" width="10" height="11"><polygon points="3,1 3,10 7.5,5.5" fill="#000"/></svg>
<div class="a" style="left:834px;top:555px;width:17px;height:17px;background:#fff"></div>
<div id="menu" class="a"></div>
<div class="a" style="left:605px;top:324px;width:246px;height:22px;background:#dfebd2;border:1px solid #b6da9e"></div>
<svg class="a" style="left:607px;top:324px" width="20" height="20"><g stroke-linecap="round"><line x1="6.4" y1="6.6" x2="14.6" y2="14.6" stroke="#2f8f2f" stroke-width="3.4"/><circle cx="6.2" cy="6.3" r="3.5" fill="#3a9e3a"/><circle cx="14.8" cy="14.8" r="3.5" fill="#2f922f"/><line x1="7.2" y1="8.4" x2="13" y2="13.6" stroke="#8fd68f" stroke-width="1" opacity=".8"/></g><line x1="5.6" y1="5.6" x2="2.6" y2="2.6" stroke="#dfebd2" stroke-width="2.2"/><line x1="15.4" y1="15.4" x2="18.4" y2="18.4" stroke="#dfebd2" stroke-width="2.2"/></svg>
<div class="m" style="left:635px;top:324px">Fix items</div>
<div class="m" style="left:635px;top:346px;letter-spacing:-0.2px">Advanced...</div>
<svg class="a" style="left:836px;top:353px" width="6" height="9"><polygon points="1,1 5,4.5 1,8" fill="#808080"/></svg>
<div class="a" style="left:607px;top:372px;width:241px;height:1px;background:#a0a0a0"></div>
<div class="m" style="left:635px;top:377px">Delete</div>
<div class="m" style="left:819px;top:377px">Del</div>
<div class="m" style="left:635px;top:399px">Move selected items to another location</div>
<div class="m" style="left:635px;top:421px">Copy selected items to another location</div>
<svg class="a" style="left:608px;top:443px" width="20" height="20"><path d="M6.5 7.2H12L12.8 4.6H16.4V14.5H6.5Z" fill="#fff2bc" stroke="#c8900e" stroke-width="1.1" stroke-linejoin="round"/><path d="M3.3 9.3H7.6L10.8 17H5.8Z" fill="#fde8a0" stroke="#c8900e" stroke-width="1.1" stroke-linejoin="round"/><path d="M11.5 8.8L16.4 13.8H13.8V17.6H9.2V13.8H6.6Z" fill="#7ddc5a" stroke="#1f9f1f" stroke-width="1.1" stroke-linejoin="round"/></svg>
<div class="m" style="left:635px;top:443px">Open folder in file explorer</div>
</body></html>
